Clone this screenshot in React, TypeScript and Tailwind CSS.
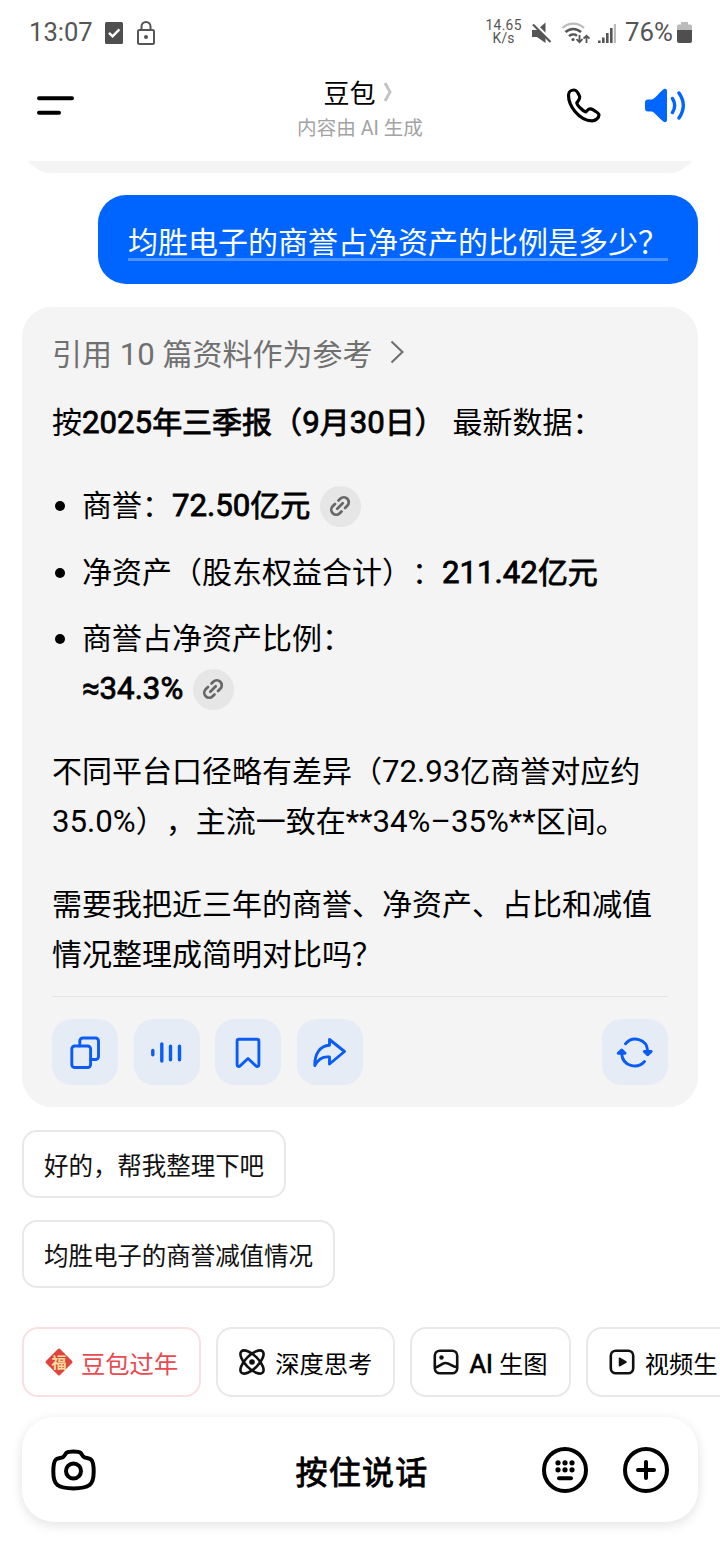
import React from 'react';

// Latin runs sit a touch larger than the Chinese glyphs around them
const Mixed = ({ children }: { children: string }) => (
  <>
    {children.split(/([\x21-\x7e–≈ ]+)/).map((part, i) =>
      i % 2 === 1 ? (
        <span key={i} className="text-[1.04em] leading-none">{part}</span>
      ) : (
        part
      )
    )}
  </>
);

// Regular glyphs thickened by a stroke, so bold text keeps the regular widths
const Strong = ({ children }: { children: string }) => (
  <b className="font-normal [-webkit-text-stroke:0.8px_currentColor]">
    <Mixed>{children}</Mixed>
  </b>
);

const StatusBar = () => (
  <div className="flex h-16 items-center pl-[29px] pr-7 pt-px text-[#555]">
    <span className="mt-px text-[25.6px] leading-none">13:07</span>
    <svg className="ml-3 h-[22px] w-[18px]" viewBox="0 0 18 22">
      <rect width="18" height="22" rx="1.5" fill="#4f4f4f" />
      <path d="M4 10.8l3.6 3.6 6.8-7" fill="none" stroke="#fff" strokeWidth="2.4" />
    </svg>
    <svg className="ml-[14px] h-6 w-[18px]" viewBox="0 0 18 24" fill="none" stroke="#555" strokeWidth="2">
      <rect x="1" y="9" width="16" height="14" rx="1.5" />
      <path d="M4.5 9V5.500a4.500 4.500 0 0 1 9 0V9" />
      <circle cx="9" cy="16" r="2" fill="#555" stroke="none" />
    </svg>
    <div className="ml-auto flex items-center">
      <div className="mb-px flex w-[37px] flex-col items-center text-[13.8px] leading-[13px] tracking-[0.3px]">
        <span>14.65</span>
        <span>K/s</span>
      </div>
      <svg className="ml-[10px] h-[22px] w-5" viewBox="0 0 20 22">
        <path d="M0 8h5l8.500-7.500v20.500L5 15H0z" fill="#555" />
        <path d="M1 0.500L20 19" stroke="#fff" strokeWidth="3" />
        <path d="M1 2.500L18.500 20" stroke="#555" strokeWidth="2.200" />
      </svg>
      <svg className="ml-[9px] h-[22px] w-[30px]" viewBox="0 0 30 22" fill="none" strokeWidth="2.4">
        <path d="M1.500 6a15.500 15.500 0 0 1 21.500 0" stroke="#bbb" />
        <path d="M4.500 10.200a11 11 0 0 1 15.500 0M8 14.200a6.200 6.200 0 0 1 8 -0.500" stroke="#555" />
        <circle cx="12" cy="17.500" r="1.600" fill="#555" />
        <path d="M18.500 13v7M15.500 17.200l3 3 3-3M25.500 21v-7M22.500 16.700l3-3 3 3" stroke="#555" strokeWidth="1.800" />
      </svg>
      <svg className="ml-[7px] h-5 w-[18px]" viewBox="0 0 18 20" fill="#555">
        <path d="M0 17.500h2.600v2.500H0zM4 14.500h2.600v5.500H4zM8 10h2.600v10H8zM12 5h2.600V20H12z" />
        <path d="M15.800 1h2.200v19h-2.200z" fill="#bbb" />
      </svg>
      <span className="ml-[9px] mt-px text-[25.8px] leading-none">76%</span>
      <svg className="ml-1 h-[21px] w-[15px]" viewBox="0 0 15 21">
        <path d="M4 0h7v2.500h2.500a1.500 1.500 0 0 1 1.500 1.500V9H0V4a1.500 1.500 0 0 1 1.500-1.500H4z" fill="#bbb" />
        <path d="M0 8h15v11a2 2 0 0 1-2 2H2a2 2 0 0 1-2-2z" fill="#4f4f4f" />
      </svg>
    </div>
  </div>
);

const Header = () => (
  <header className="grid h-[97px] grid-cols-3 items-start px-[34px]">
    <svg className="ml-[3px] mt-8 h-5 w-[37px]" viewBox="0 0 37 20" stroke="#000" strokeWidth="4" strokeLinecap="round">
      <path d="M2 2.200h33M2 16.800h20" />
    </svg>
    <div className="flex flex-col items-center">
      <div className="-ml-1 mt-[10px] flex h-[38px] items-center text-[26px] text-black">
        <span className="mt-[3px]">豆包</span>
        <svg className="mb-[3px] ml-[7px] h-5 w-[10px]" viewBox="0 0 10 20" fill="none" stroke="#c4c4c4" strokeWidth="3">
          <path d="M2 1l5 9-5 9" />
        </svg>
      </div>
      <div className="mt-[2px] whitespace-nowrap text-[19.6px] leading-[30px] text-[#a3a3a3]">内容由 AI 生成</div>
    </div>
    <div className="mt-6 flex items-center justify-end gap-11">
      <svg className="h-[35px] w-[35px]" viewBox="0 0 35 35" fill="none" stroke="#000" strokeWidth="3.200" strokeLinejoin="round">
        <path d="M2.500 7C2.500 12 4.500 18 9 23.500C14 29.500 20.500 32.800 26 32.800C29.500 32.800 33 29.800 33 27C33 25.500 31.500 24.400 26.800 21.600C24 20 22.500 21 19.800 24C17.500 23.500 11 17.500 10.800 14.800C13 12 14.500 10.500 13.500 8.200C12 4.500 10.500 2 8 2C5 2 2.500 4 2.500 7Z" />
      </svg>
      <svg className="h-[35px] w-[41px]" viewBox="0 0 41 35" fill="none" stroke="#0066ff" strokeWidth="3.400" strokeLinecap="round">
        <path d="M3 11.500h4C11 10 13.500 5 18.500 1.300c1.600-1 3.500-.3 3.500 1.700v29c0 2-1.900 2.700-3.500 1.700C13.500 30 11 25.500 7 23.500H3c-1.800 0-3-1.200-3-3v-6c0-1.800 1.200-3 3-3z" fill="#0066ff" stroke="none" />
        <path d="M27.500 10.500c2.800 4.500 2.800 9.500 0 14M34 5c5.500 8 5.500 17 0 25" />
      </svg>
    </div>
  </header>
);

const LinkBadge = () => (
  <span className="ml-[10px] flex h-[41px] w-[41px] items-center justify-center rounded-full bg-[#e6e6e6]">
    <svg className="-ml-px h-6 w-6" viewBox="0 0 24 24" fill="none" stroke="#666" strokeWidth="2.700" strokeLinecap="round">
      <path d="M10.500 6.500l1.800-1.800a4.800 4.800 0 0 1 7 7l-2.300 2.300" />
      <path d="M13.500 17.500l-1.800 1.800a4.800 4.800 0 0 1-7-7l2.300-2.300" />
      <path d="M9.300 14.700l5.400-5.400" />
    </svg>
  </span>
);

const Bullet = ({ children }: { children: React.ReactNode }) => (
  <li className="flex">
    <span className="ml-[3px] mr-[17px] mt-5 h-[10px] w-[10px] shrink-0 rounded-full bg-black" />
    <div>{children}</div>
  </li>
);

const actions = [
  <g key="copy">
    <rect x="3.800" y="12" width="18.800" height="21.500" rx="3" />
    <path d="M11.800 12V7a3 3 0 0 1 3-3h12.700a3 3 0 0 1 3 3v15.500a3 3 0 0 1-3 3h-5" />
  </g>,
  <path key="voice" strokeWidth="3.400" d="M2.800 16.500v4.300M11.800 10v17M20.500 12.200v13.600M29.500 12.200v13.600" />,
  <path key="save" d="M8.100 5.300h17.800a2 2 0 0 1 2 2V30.700c0 1.800-1.800 2.300-3 1.200l-7.900-7.400-7.900 7.400C7.900 33 6.100 32.500 6.100 30.700V7.300a2 2 0 0 1 2-2z" />,
  <path key="share" d="M16.500 5.500L31.500 17.500 16.500 30v-7C9.500 22 5 25.500 1.800 31.500 1.500 20.500 6.500 11.800 16.500 11.300z" />,
];

const ActionButton = ({ children }: { children: React.ReactNode }) => (
  <button className="flex h-[66px] w-[66px] items-center justify-center rounded-[20px] bg-[#e5ecf6]">
    <svg className="h-[37px] w-[34px] overflow-visible" viewBox="0 0 34 37" fill="none" stroke="#0a5cf5" strokeWidth="2.900" strokeLinecap="round" strokeLinejoin="round">
      {children}
    </svg>
  </button>
);

const AnswerCard = () => (
  <section className="ml-[22px] mt-[23px] h-[800px] w-[676px] rounded-[30px] bg-[#f4f4f4] px-[30px] pt-[23px] text-[30px] leading-[50px] text-black">
    <div className="flex items-center text-[#707070]">
      <span><Mixed>引用 10 篇资料作为参考</Mixed></span>
      <svg className="mb-[6px] ml-[17px] h-6 w-[14px]" viewBox="0 0 14 24" fill="none" stroke="#707070" strokeWidth="2.200">
        <path d="M1.500 1.500L12.500 12 1.500 22.500" />
      </svg>
    </div>
    <p className="mt-[18px]">
      按<Strong>2025年三季报（9月30日）</Strong>
      <Mixed> 最新数据：</Mixed>
    </p>
    <ul className="mt-[33px] flex flex-col gap-[16.5px]">
      <Bullet>
        <div className="flex items-center">
          <span>商誉：<Strong>72.50亿元</Strong></span>
          <LinkBadge />
        </div>
      </Bullet>
      <Bullet>
        净资产（股东权益合计）：<Strong>211.42亿元</Strong>
      </Bullet>
      <Bullet>
        <div>商誉占净资产比例：</div>
        <div className="flex items-center">
          <Strong>≈34.3%</Strong>
          <LinkBadge />
        </div>
      </Bullet>
    </ul>
    <p className="mt-[33px] whitespace-nowrap">
      <Mixed>不同平台口径略有差异（72.93亿商誉对应约</Mixed>
      <br />
      <Mixed>35.0%），主流一致在**34%–35%**区间。</Mixed>
    </p>
    <p className="mt-[33px]">
      需要我把近三年的商誉、净资产、占比和减值
      <br />
      <Mixed>情况整理成简明对比吗？</Mixed>
    </p>
    <div className="mt-4 h-px bg-[#e4e4e4]" />
    <div className="mt-[22px] flex gap-[15.500px]">
      {actions.map((icon, i) => (
        <ActionButton key={i}>{icon}</ActionButton>
      ))}
      <div className="ml-auto">
        <ActionButton>
          <path d="M7.500 9.800C14.500 1.500 28.800 4.500 29.700 17M26.500 27.500C19.500 35.500 4.800 32.500 3.700 20" />
          <path d="M26.300 17.500h6.900l-3.500 3.300zM0.200 19.300h6.900L3.700 16z" fill="#0a5cf5" />
        </ActionButton>
      </div>
    </div>
  </section>
);

const Suggestion = ({ text }: { text: string }) => (
  <button className="flex h-[68px] items-center rounded-[15px] border-2 border-[#e8e8e8] px-5 text-[24.5px] tracking-[-0.05px] text-[#111]">
    <span className="mt-[7px]">{text}</span>
  </button>
);

const FuIcon = () => (
  <svg className="h-[30px] w-[30px]" viewBox="0 0 30 30">
    <rect x="5" y="5" width="20" height="20" rx="1.500" transform="rotate(45 15 15)" fill="#e0443e" />
    <text x="15" y="20.500" textAnchor="middle" fontSize="15" fontWeight="700" fill="#f8dc9c">福</text>
  </svg>
);

const Tool = ({ icon, label, festive }: { icon: React.ReactNode; label: React.ReactNode; festive?: boolean }) => (
  <button
    className={`flex h-[70px] shrink-0 items-center whitespace-nowrap rounded-[16px] border-2 px-[21px] text-[24.3px] ${
      festive ? 'border-[#fbdfe2] text-[#e84a50]' : 'border-[#e8e8e8] text-black'
    }`}
  >
    {icon}
    <span className="mt-[6px]">{label}</span>
  </button>
);

const iconProps = {
  className: 'mr-[10px] h-[26px] w-[26px]',
  viewBox: '0 0 26 26',
  fill: 'none',
  stroke: '#111',
  strokeWidth: 2.6,
};

const ToolRow = () => (
  <div className="ml-[22px] mt-[39px] flex gap-[15px] overflow-hidden">
    <Tool festive icon={<span className="-ml-[1.5px] mr-[7.5px]"><FuIcon /></span>} label="豆包过年" />
    <Tool
      icon={
        <svg {...iconProps}>
          <ellipse cx="13" cy="13" rx="15" ry="6.500" transform="rotate(45 13 13)" />
          <ellipse cx="13" cy="13" rx="15" ry="6.500" transform="rotate(-45 13 13)" />
          <circle cx="13" cy="13" r="2.800" fill="#111" stroke="none" />
        </svg>
      }
      label="深度思考"
    />
    <Tool
      icon={
        <svg {...iconProps}>
          <rect x="1.800" y="1.800" width="22.400" height="22.400" rx="5" />
          <circle cx="8.500" cy="8.500" r="2.200" fill="#111" stroke="none" />
          <path d="M2 18.500c4.500-.5 6.500-4.500 10.500-4.500 4.500 0 6 3.500 11.500 4" />
        </svg>
      }
      label={<><span className="text-[25.3px] leading-none [-webkit-text-stroke:0.7px_currentColor]">AI </span>生图</>}
    />
    <Tool
      icon={
        <svg {...iconProps}>
          <rect x="1.800" y="1.800" width="22.400" height="22.400" rx="5" />
          <path d="M10.500 9.200v7.600l6.500-3.800z" fill="#111" strokeWidth="1.500" strokeLinejoin="round" />
        </svg>
      }
      label="视频生"
    />
  </div>
);

const InputBar = () => (
  <div className="mx-[22px] mt-5 grid h-[105px] grid-cols-[1fr_auto_1fr] items-center rounded-[32px] bg-white px-[29px] shadow-[0_3px_12px_rgba(0,0,0,0.12)]">
    <svg className="h-[42px] w-[45px]" viewBox="0 0 45 42" fill="none" stroke="#000" strokeWidth="4" strokeLinejoin="round">
      <path d="M22.500 2.500c3.500 0 5.500 0 7 1.300 1.500 1.400 2 3.800 4 4.600 2 .8 4.500.2 6.500 2 2.500 2.300 2.700 7 2.700 12.100 0 7-.7 11-4.200 13.500-3 2.300-8 3.400-16 3.400s-13-1.100-16-3.400C3 33.500 2.300 29.500 2.300 22.500c0-5.100.2-9.800 2.700-12.100 2-1.800 4.500-1.200 6.500-2 2-.8 2.500-3.200 4-4.600 1.500-1.300 3.500-1.300 7-1.300z" />
      <circle cx="22.500" cy="22" r="7.500" />
    </svg>
    <span className="ml-1 mt-[7px] text-[32px] tracking-[1.300px] text-black [-webkit-text-stroke:0.9px_currentColor]">按住说话</span>
    <div className="flex justify-end gap-[35px]">
      <svg className="h-[46px] w-[46px]" viewBox="0 0 46 46">
        <circle cx="23" cy="23" r="21" fill="none" stroke="#000" strokeWidth="4" />
        {[15.8, 22.8].map(y => [16, 23, 30].map(x => <circle key={`${x}-${y}`} cx={x} cy={y} r="2.600" />))}
        <path d="M17 31.200h12" stroke="#000" strokeWidth="4" strokeLinecap="round" />
      </svg>
      <svg className="h-[46px] w-[46px]" viewBox="0 0 46 46" fill="none" stroke="#000" strokeWidth="4" strokeLinecap="round">
        <circle cx="23" cy="23" r="21" />
        <path d="M15 23h16M23 15v16" />
      </svg>
    </div>
  </div>
);

export default function App() {
  return (
    <div lang="zh-CN" className="h-[1544px] w-[720px] overflow-hidden bg-white font-['Roboto','Noto_Sans_CJK_SC',sans-serif] [text-spacing-trim:space-all]">
      <StatusBar />
      <Header />
      {/* tail of the previous answer, cut by the header */}
      <div className="mx-[22px] flex h-3 items-end overflow-hidden">
        <div className="h-20 w-full shrink-0 rounded-[30px] bg-[#f4f4f4]" />
      </div>
      <div className="ml-auto mr-[22px] mt-[22px] flex h-[89px] w-[600px] items-center rounded-[28px] bg-[#0065ff] px-[30px]">
        <div className="h-[42px] border-b-[3px] border-[#4a93ff] text-[30px] leading-[48px] text-white">
          均胜电子的商誉占净资产的比例是多少？
        </div>
      </div>
      <AnswerCard />
      <div className="ml-[22px] mt-[23px] flex flex-col items-start gap-[22px]">
        <Suggestion text="好的，帮我整理下吧" />
        <Suggestion text="均胜电子的商誉减值情况" />
      </div>
      <ToolRow />
      <InputBar />
    </div>
  );
}
